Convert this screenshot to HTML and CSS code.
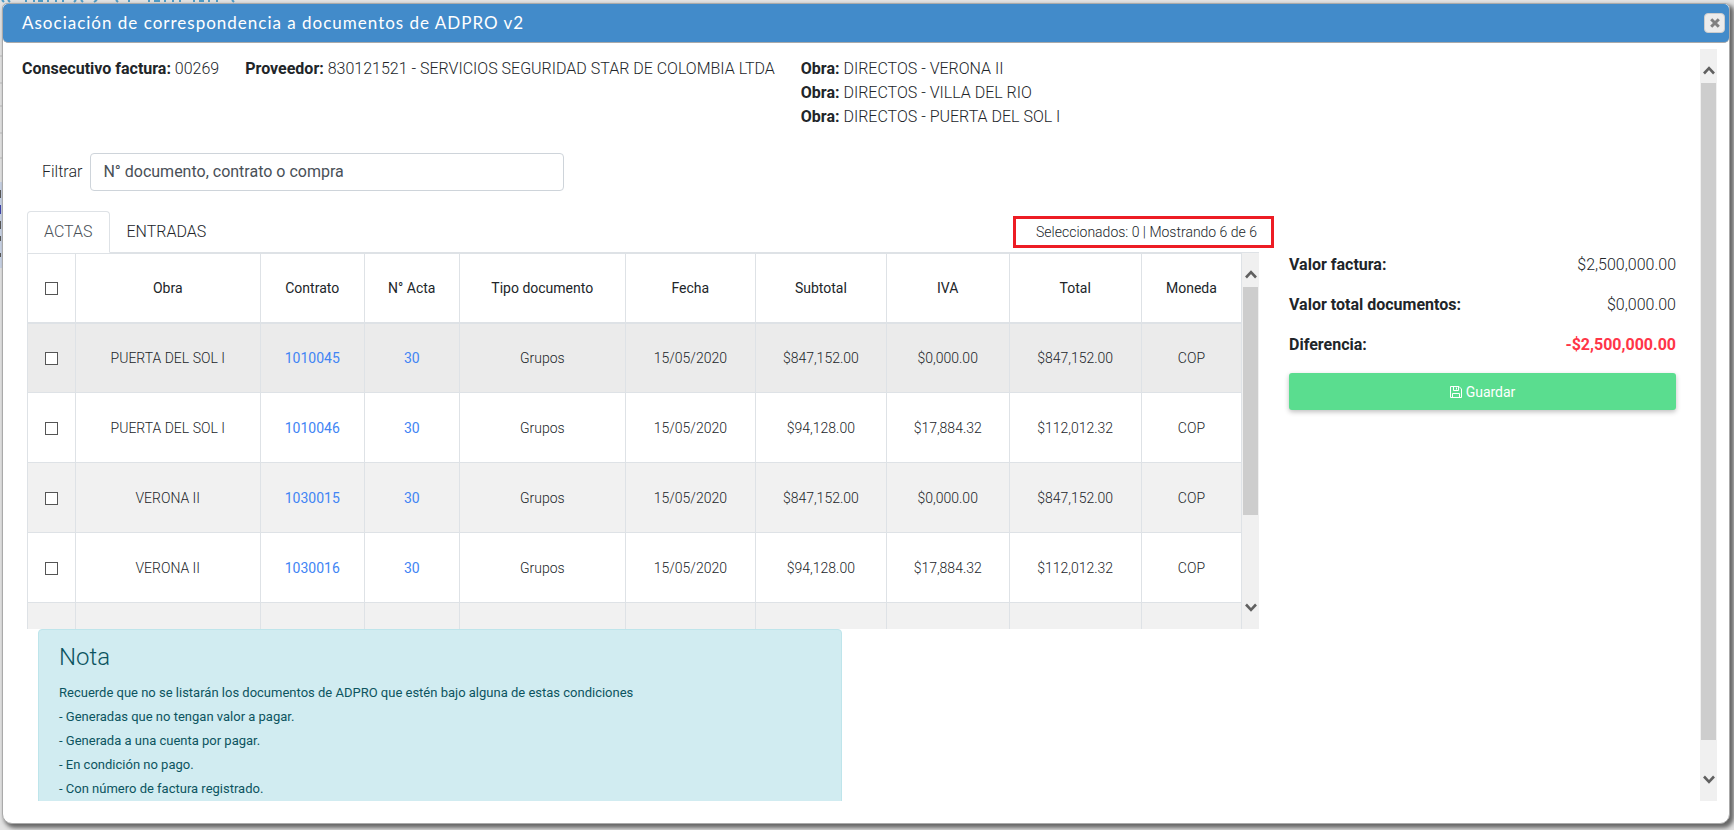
FILE: index.html
```
<!DOCTYPE html>
<html lang="es">
<head>
<meta charset="utf-8">
<title>Asociación de correspondencia a documentos de ADPRO v2</title>
<link rel="stylesheet" href="styles.css">
</head>
<body>
<svg class="backdrop" width="240" height="270" aria-hidden="true">
  <path d="M0 56H2M0 83H2M0 106H2M0 133H2M0 158H2" stroke="#bbb"/>
  <path d="M0 182H2V268H0Z" fill="#c9d3e6"/>
  <path d="M0 190H1V198H0ZM0 221H1V229H0ZM0 236H1V241H0ZM0 253H1V257H0Z" fill="#555"/>
  <path d="M0 205H1V214H0Z" fill="#3a3fa8"/>
  <path d="M2 0 4 2M8 0 10 2M26 0V2M34 0V2M38 1H43M48 0V2M56 0V2M63 0V2M76 0 74 2M81 0 83 2M97 0 94 2M116 0 118 2M129 0V2M149 0V2M154 1H160M165 0V2M173 0V2M180 0V2M194 0V2M199 1H204M209 0V2M217 0V2M232 0 234 2" fill="none" stroke="#4e9cc8" stroke-width="2"/>
</svg>
<section class="dialog" role="dialog" aria-labelledby="dialog-title">
  <header class="dialog-bar">
    <h1 class="dialog-title" id="dialog-title">Asociación de correspondencia a documentos de ADPRO v2</h1>
    <button class="close" type="button" aria-label="Cerrar">
      <svg width="10" height="10" viewBox="0 0 10 10"><path d="M1.2 1.2 8.8 8.8M8.8 1.2 1.2 8.8" stroke="#808080" stroke-width="3"/></svg>
    </button>
  </header>
  <div class="dialog-body">
    <main class="content">
      <div class="summary">
        <p><b>Consecutivo factura:</b> 00269</p>
        <p><b>Proveedor:</b> 830121521 - SERVICIOS SEGURIDAD STAR DE COLOMBIA LTDA</p>
        <div>
          <p><b>Obra:</b> DIRECTOS - VERONA II</p>
          <p><b>Obra:</b> DIRECTOS - VILLA DEL RIO</p>
          <p><b>Obra:</b> DIRECTOS - PUERTA DEL SOL I</p>
        </div>
      </div>
      <div class="filter">
        <label for="filter">Filtrar</label>
        <input id="filter" type="text" placeholder="N° documento, contrato o compra">
      </div>
      <div class="columns">
        <div class="documents">
          <div class="tabs">
            <button class="tab tab-active" type="button">ACTAS</button>
            <button class="tab" type="button">ENTRADAS</button>
            <span class="counter">Seleccionados: 0 | Mostrando 6 de 6</span>
          </div>
          <div class="table-area">
            <div class="table-clip">
              <table class="table">
                <colgroup><col class="c-check"><col class="c-obra"><col class="c-contrato"><col class="c-acta"><col class="c-tipo"><col class="c-fecha"><col class="c-subtotal"><col class="c-iva"><col class="c-total"><col class="c-moneda"></colgroup>
                <thead>
                  <tr><th><input type="checkbox" aria-label="Seleccionar todo"></th><th>Obra</th><th>Contrato</th><th>N° Acta</th><th>Tipo documento</th><th>Fecha</th><th>Subtotal</th><th>IVA</th><th>Total</th><th>Moneda</th></tr>
                </thead>
                <tbody>
                  <tr class="hovered"><td><input type="checkbox" aria-label="Acta 1010045"></td><td>PUERTA DEL SOL I</td><td><a href="#">1010045</a></td><td><a href="#">30</a></td><td>Grupos</td><td>15/05/2020</td><td>$847,152.00</td><td>$0,000.00</td><td>$847,152.00</td><td>COP</td></tr>
                  <tr><td><input type="checkbox" aria-label="Acta 1010046"></td><td>PUERTA DEL SOL I</td><td><a href="#">1010046</a></td><td><a href="#">30</a></td><td>Grupos</td><td>15/05/2020</td><td>$94,128.00</td><td>$17,884.32</td><td>$112,012.32</td><td>COP</td></tr>
                  <tr><td><input type="checkbox" aria-label="Acta 1030015"></td><td>VERONA II</td><td><a href="#">1030015</a></td><td><a href="#">30</a></td><td>Grupos</td><td>15/05/2020</td><td>$847,152.00</td><td>$0,000.00</td><td>$847,152.00</td><td>COP</td></tr>
                  <tr><td><input type="checkbox" aria-label="Acta 1030016"></td><td>VERONA II</td><td><a href="#">1030016</a></td><td><a href="#">30</a></td><td>Grupos</td><td>15/05/2020</td><td>$94,128.00</td><td>$17,884.32</td><td>$112,012.32</td><td>COP</td></tr>
                  <tr><td></td><td></td><td></td><td></td><td></td><td></td><td></td><td></td><td></td><td></td></tr>
                </tbody>
              </table>
            </div>
            <div class="scrollbar">
              <svg class="arrow" viewBox="0 0 12 9"><path d="M1 7.5 6 2.2 11 7.5" fill="none" stroke="#606060" stroke-width="2.6"/></svg>
              <div class="track"><div class="thumb thumb-table"></div></div>
              <svg class="arrow" viewBox="0 0 12 9"><path d="M1 1.5 6 6.8 11 1.5" fill="none" stroke="#606060" stroke-width="2.6"/></svg>
            </div>
          </div>
          <div class="note">
            <h2>Nota</h2>
            <p>Recuerde que no se listarán los documentos de ADPRO que estén bajo alguna de estas condiciones</p>
            <p>- Generadas que no tengan valor a pagar.</p>
            <p>- Generada a una cuenta por pagar.</p>
            <p>- En condición no pago.</p>
            <p>- Con número de factura registrado.</p>
          </div>
        </div>
        <aside class="totals">
          <dl>
            <div><dt>Valor factura:</dt><dd>$2,500,000.00</dd></div>
            <div><dt>Valor total documentos:</dt><dd>$0,000.00</dd></div>
            <div><dt>Diferencia:</dt><dd class="negative">-$2,500,000.00</dd></div>
          </dl>
          <button class="save" type="button">
            <svg width="12" height="12" viewBox="0 0 12 12" fill="none" stroke="#fff"><path d="M.5.5H9L11.500 3V11.500H.5ZM2.500 11.500V7.500H9.500V11.500M3.500.5V4.500H8.500V.5M6.500 1.500V3.500"/></svg>
            Guardar
          </button>
        </aside>
      </div>
    </main>
    <div class="scrollbar">
      <svg class="arrow" viewBox="0 0 12 9"><path d="M1 7.5 6 2.2 11 7.5" fill="none" stroke="#606060" stroke-width="2.6"/></svg>
      <div class="track"><div class="thumb thumb-page"></div></div>
      <svg class="arrow" viewBox="0 0 12 9"><path d="M1 1.5 6 6.8 11 1.5" fill="none" stroke="#606060" stroke-width="2.6"/></svg>
    </div>
  </div>
</section>
</body>
</html>
```
FILE: styles.css
```
* { box-sizing: border-box; }
body {
  margin: 0;
  height: 100vh;
  padding: 3px 4px 6px 2px;
  overflow: hidden;
  background: #e3e3e3;
  color: #212529;
  font: 300 16px/24px Roboto, sans-serif;
}
p, h1, h2, dl, dd { margin: 0; }
b { font-weight: 700; }
button, input { font-family: inherit; }

.backdrop {
  position: absolute;
  top: 0;
  left: 0;
}
.dialog {
  position: relative;
  display: flex;
  flex-direction: column;
  height: 100%;
  background: #fff;
  border: 1px solid #aaa;
  border-radius: 5px 5px 10px 10px;
  box-shadow: 3px 3px 4px 1px #666;
}
.dialog-bar {
  display: flex;
  flex: none;
  align-items: center;
  justify-content: space-between;
  height: 39px;
  padding: 0 4px 0 19px;
  background: #428bca;
  border-bottom: 1px solid #aaa;
  border-radius: 5px;
}
.dialog-title {
  color: #fff;
  font: 400 17px/24px Lato, sans-serif;
  letter-spacing: 1px;
}
.close {
  display: grid;
  place-items: center;
  width: 21px;
  height: 20px;
  padding: 0;
  background: #ececec;
  border: 1px solid #ccc;
  border-radius: 4px;
}
.dialog-body {
  display: flex;
  flex: 1;
  min-height: 0;
  padding: 6px 12px 22px 0;
}
.content {
  flex: 1;
  min-width: 0;
  padding: 8px 24px 0;
  overflow: hidden;
}
.summary {
  display: flex;
  gap: 26px;
  margin-left: -5px;
}
.filter {
  display: flex;
  align-items: center;
  gap: 8px;
  margin: 24px 0 20px 15px;
}
.filter input {
  flex: 0 1 474px;
  height: 38px;
  padding: 0 12px 2px;
  border: 1px solid #ced4da;
  border-radius: 4px;
  font-size: 16px;
}
.filter input::placeholder { color: #495057; opacity: 1; }
.columns {
  display: grid;
  grid-template-columns: 1232fr 387fr;
  gap: 30px;
}
.documents { min-width: 0; }
.tabs {
  display: flex;
  align-items: flex-end;
  border-bottom: 1px solid #dee2e6;
}
.tab {
  margin-bottom: -1px;
  padding: 8px 16px;
  background: none;
  border: 1px solid transparent;
  border-radius: 4px 4px 0 0;
  color: #212529;
  font-size: 16px;
  font-weight: 300;
  line-height: 24px;
}
.tab-active {
  background: #fff;
  border-color: #dee2e6 #dee2e6 #fff;
  color: #495057;
}
.counter {
  margin: 0 -15px 4px auto;
  padding: 0 14px 0 20px;
  border: 3px solid #ed1c24;
  font-size: 14px;
  line-height: 26px;
}
.table-area {
  display: flex;
  height: 376px;
}
.table-clip {
  flex: 1;
  min-width: 0;
  overflow: hidden;
}
.table {
  width: 100%;
  table-layout: fixed;
  border-collapse: collapse;
  font-size: 14px;
  line-height: 21px;
  text-align: center;
}
.table th, .table td {
  height: 70px;
  padding: 2px 0 0;
  border: 1px solid #dee2e6;
}
.table thead th {
  height: 69px;
  border-bottom-width: 2px;
  font-weight: 400;
}
.table tbody tr:nth-child(odd) { background: #f1f1f1; }
.table tbody tr.hovered:nth-child(odd) { background: #ebebeb; }
.table a { color: #4285f4; font-weight: 400; text-decoration: none; }
.table input {
  display: block;
  width: 13px;
  height: 13px;
  margin: 0 auto;
  appearance: none;
  background: #fff;
  border: 1px solid #555;
}
.c-check { width: 48px; }
.c-obra { width: 15.2%; }
.c-contrato { width: 8.6%; }
.c-acta { width: 7.8%; }
.c-tipo { width: 13.7%; }
.c-fecha { width: 10.7%; }
.c-subtotal { width: 10.8%; }
.c-iva { width: 10.1%; }
.c-total { width: 10.9%; }

.scrollbar {
  display: flex;
  flex: none;
  flex-direction: column;
  align-items: center;
  width: 17px;
  padding: 17px 1px;
  background: #f0f0f0;
}
.arrow { flex: none; width: 12px; height: 9px; }
.track { flex: 1; width: 100%; padding: 8px 0; }
.thumb { background: #cdcdcd; }
.thumb-table { height: 74%; }
.thumb-page { height: 96%; }

.note {
  width: 804px;
  max-width: 100%;
  margin-left: 11px;
  padding: 11px 20px;
  background: #d1ecf1;
  border: 1px solid #bee5eb;
  border-radius: 4px;
  color: #0c5460;
  font-size: 13px;
  font-weight: 400;
}
.note h2 {
  margin-bottom: 8px;
  font-size: 24px;
  font-weight: 300;
  line-height: 32px;
}
.totals { padding-top: 34px; }
.totals dl { display: grid; gap: 16px; padding-top: 8px; }
.totals dl div { display: flex; justify-content: space-between; }
.totals dt { font-weight: 700; }
.totals .negative { color: #ff3547; font-weight: 700; }
.save {
  display: flex;
  align-items: center;
  justify-content: center;
  gap: 4px;
  width: 100%;
  height: 37px;
  margin-top: 16px;
  background: #5add8f;
  border: 0;
  border-radius: 3px;
  box-shadow: 0 2px 5px rgba(0, 0, 0, .25);
  color: #fff;
  font-size: 14px;
}
```
